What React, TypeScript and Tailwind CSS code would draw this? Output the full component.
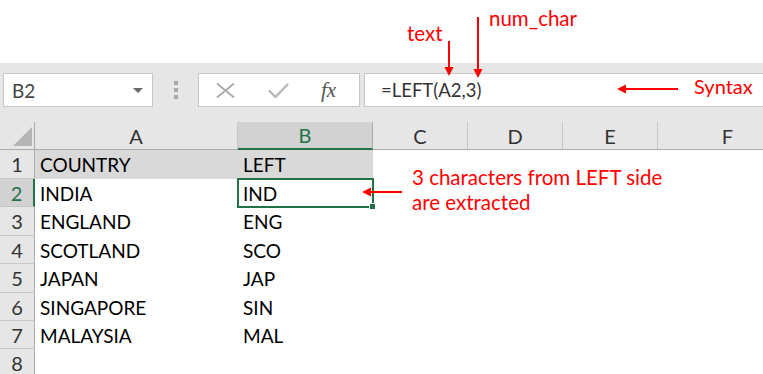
import React from "react";

const cols = [
  { key: "A", w: 203 },
  { key: "B", w: 135 },
  { key: "C", w: 95 },
  { key: "D", w: 95 },
  { key: "E", w: 95 },
  { key: "F", w: 140 },
];

const rows: { n: number; h: number; a: string; b: string }[] = [
  { n: 1, h: 29, a: "COUNTRY", b: "LEFT" },
  { n: 2, h: 28, a: "INDIA", b: "IND" },
  { n: 3, h: 29, a: "ENGLAND", b: "ENG" },
  { n: 4, h: 28, a: "SCOTLAND", b: "SCO" },
  { n: 5, h: 29, a: "JAPAN", b: "JAP" },
  { n: 6, h: 28, a: "SINGAPORE", b: "SIN" },
  { n: 7, h: 28, a: "MALAYSIA", b: "MAL" },
  { n: 8, h: 28, a: "", b: "" },
];

const font = { fontFamily: "Lato, 'Noto Sans', sans-serif" };

export default function App() {
  return (
    <div
      className="relative w-[763px] h-[374px] overflow-hidden bg-white"
      style={font}
    >
      {/* top white area */}
      <div className="h-[63px]" />

      {/* formula bar band */}
      <div className="h-[59px] bg-[#e6e6e6] pt-[10px]">
        <div className="flex items-center h-[34px]">
          <div className="ml-[3px] w-[150px] h-[34px] bg-white border border-[#c6c6c6] flex items-center justify-between pl-[8px] pr-[9px]">
            <span className="text-[19px] text-[#444] leading-none">B2</span>
            <svg width="10" height="5" viewBox="0 0 10 5">
              <path d="M0 0 L10 0 L5 5 Z" fill="#6a6a6a" />
            </svg>
          </div>
          <div className="w-[45px] flex flex-col items-center gap-[3px]">
            <div className="w-[4px] h-[4px] bg-[#a8a8a8]" />
            <div className="w-[4px] h-[4px] bg-[#a8a8a8]" />
            <div className="w-[4px] h-[4px] bg-[#a8a8a8]" />
          </div>
          <div className="w-[162px] h-[34px] bg-white border border-[#c6c6c6] flex items-center">
            <svg className="ml-[17px]" width="19" height="15" viewBox="0 0 19 15">
              <path d="M1 0.5 L18 14.5 M18 0.5 L1 14.5" stroke="#a8a8a8" strokeWidth="1.8" fill="none" />
            </svg>
            <svg className="ml-[33px]" width="21" height="15" viewBox="0 0 21 15">
              <path d="M1 7.5 L7.5 14 L20 1" stroke="#b8b8b8" strokeWidth="2.4" fill="none" />
            </svg>
            <span
              className="ml-[32px] text-[21px] italic text-[#555] leading-none"
              style={{ fontFamily: "'Liberation Serif', serif" }}
            >
              fx
            </span>
          </div>
          <div className="ml-[4px] flex-1 h-[34px] bg-white border border-[#c6c6c6] border-r-0 flex items-center pl-[16px]">
            <span className="text-[18.5px] text-[#333] leading-none">=LEFT(A2,3)</span>
          </div>
        </div>
      </div>

      {/* column headers */}
      <div className="flex h-[28px] bg-[#e6e6e6] border-b border-[#ababab]">
        <div className="relative w-[35px] shrink-0 border-r border-[#ababab]">
          <svg className="absolute left-[13px] top-[5px]" width="19" height="19" viewBox="0 0 19 19">
            <path d="M19 0 L19 19 L0 19 Z" fill="#b4b4b4" />
          </svg>
        </div>
        {cols.map((c) => {
          const sel = c.key === "B";
          return (
            <div
              key={c.key}
              style={{ width: c.w }}
              className={
                sel
                  ? "shrink-0 flex items-center justify-center bg-[#d2d2d2] border-r border-[#ababab] border-b-2 border-b-[#217346] text-[#217346] text-[20px] leading-none -mb-[1px]"
                  : "shrink-0 flex items-center justify-center border-r border-[#c6c6c6] text-[#333] text-[20px] leading-none"
              }
            >
              {c.key}
            </div>
          );
        })}
      </div>

      {/* rows */}
      {rows.map((r) => {
        const selRow = r.n === 2;
        return (
          <div key={r.n} className="flex" style={{ height: r.h }}>
            <div
              className={
                selRow
                  ? "w-[35px] shrink-0 flex items-center justify-center bg-[#d2d2d2] border-r-2 border-[#217346] border-b border-b-[#c6c6c6] text-[#217346] text-[20px] leading-none"
                  : "w-[35px] shrink-0 flex items-center justify-center bg-[#e6e6e6] border-r border-[#ababab] border-b border-b-[#c6c6c6] text-[#333] text-[20px] leading-none"
              }
            >
              {r.n}
            </div>
            <div
              className={
                r.n === 1
                  ? "w-[203px] shrink-0 flex items-center pl-[5px] bg-[#d9d9d9] text-[19px] text-black leading-none"
                  : "w-[203px] shrink-0 flex items-center pl-[5px] text-[19px] text-black leading-none"
              }
            >
              {r.a}
            </div>
            <div
              className={
                r.n === 1
                  ? "relative w-[135px] shrink-0 flex items-center pl-[5px] bg-[#d9d9d9] text-[19px] text-black leading-none"
                  : "relative w-[135px] shrink-0 flex items-center pl-[5px] text-[19px] text-black leading-none"
              }
            >
              {r.b}
              {selRow && (
                <>
                  <div className="absolute -left-[1px] -top-[1px] -right-[1px] -bottom-[1px] border-2 border-[#217346]" />
                  <div className="absolute -right-[3px] -bottom-[3px] w-[7px] h-[7px] bg-[#217346] border border-white" />
                </>
              )}
            </div>
            <div className="flex-1" />
          </div>
        );
      })}

      {/* annotations */}
      <span className="absolute left-[407px] top-[23px] text-[20.5px] leading-none text-[#ff0000]">
        text
      </span>
      <span className="absolute left-[489px] top-[8px] text-[20.5px] leading-none text-[#ff0000]">
        num_char
      </span>
      <span className="absolute left-[694px] top-[76px] text-[20px] leading-none text-[#ff0000]">
        Syntax
      </span>
      <div className="absolute left-[412px] top-[165px] text-[20.5px] leading-[25px] text-[#ff0000]">
        <div>3 characters from LEFT side</div>
        <div>are extracted</div>
      </div>

      <svg className="absolute left-0 top-0 pointer-events-none" width="763" height="374" viewBox="0 0 763 374">
        {/* text arrow */}
        <line x1="449" y1="41" x2="449" y2="68" stroke="#ff0000" strokeWidth="2" />
        <path d="M444.5 67 L453.5 67 L449 76 Z" fill="#ff0000" />
        {/* num_char arrow */}
        <line x1="478" y1="17" x2="478" y2="70" stroke="#ff0000" strokeWidth="2" />
        <path d="M473.5 69 L482.5 69 L478 78 Z" fill="#ff0000" />
        {/* syntax arrow */}
        <line x1="625" y1="89" x2="678" y2="89" stroke="#ff0000" strokeWidth="2" />
        <path d="M626 84.5 L626 93.5 L617 89 Z" fill="#ff0000" />
        {/* cell arrow */}
        <line x1="370" y1="192" x2="402" y2="192" stroke="#ff0000" strokeWidth="2" />
        <path d="M371 187.5 L371 196.5 L362 192 Z" fill="#ff0000" />
      </svg>
    </div>
  );
}
